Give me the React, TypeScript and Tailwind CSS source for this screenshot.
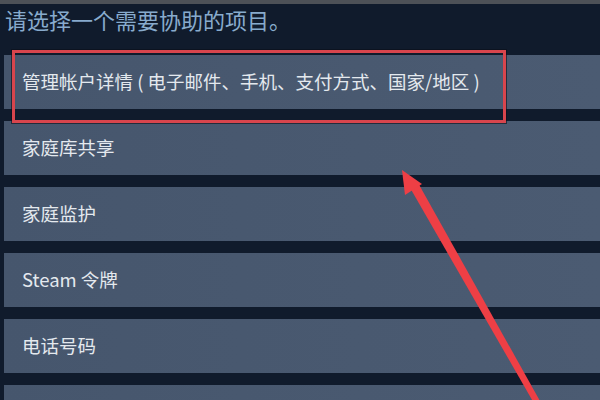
import React from 'react';

const items: string[] = [
  '管理帐户详情 ( 电子邮件、手机、支付方式、国家/地区 )',
  '家庭库共享',
  '家庭监护',
  'Steam 令牌',
  '电话号码',
  '',
];

const font = { fontFamily: '"Noto Sans CJK SC", "Noto Sans", sans-serif' };

// arrow geometry: tip at (402,170), heading down-right to off-screen
const Arrow = () => (
  <svg className="absolute inset-0 pointer-events-none" width={600} height={400} viewBox="0 0 600 400">
    <polygon points="409,186 417,181 545,410 539,412" fill="#ee3f45" />
    <polygon points="402,170 422,184 405,195" fill="#ee3f45" />
  </svg>
);

export default function App() {
  return (
    <div className="relative w-[600px] h-[400px] overflow-hidden bg-[#101b2c]" style={font}>
      <div className="h-[4px] bg-[#4d5157]" />
      <h1 className="mt-[5px] pl-[5px] text-[22px] leading-[21px] text-[#88abcd] whitespace-nowrap">
        请选择一个需要协助的项目。
      </h1>

      {/* Help topic rows */}
      <div className="mt-[25px] pl-[4px] flex flex-col gap-[12px]">
        {items.map((label, i) => (
          <div
            key={i}
            className="h-[54px] flex items-center pl-[18px] bg-gradient-to-r from-[#46566d] to-[#4b5b72] text-[18.5px] text-[#e4e9ee] whitespace-nowrap"
          >
            {label}
          </div>
        ))}
      </div>

      {/* annotation box */}
      <div className="absolute left-[12px] top-[50px] w-[494px] h-[73px] border-[3px] border-[#d8454d] shadow-[0_0_0_1px_rgba(10,15,25,0.6)]" />
      <Arrow />
    </div>
  );
}
